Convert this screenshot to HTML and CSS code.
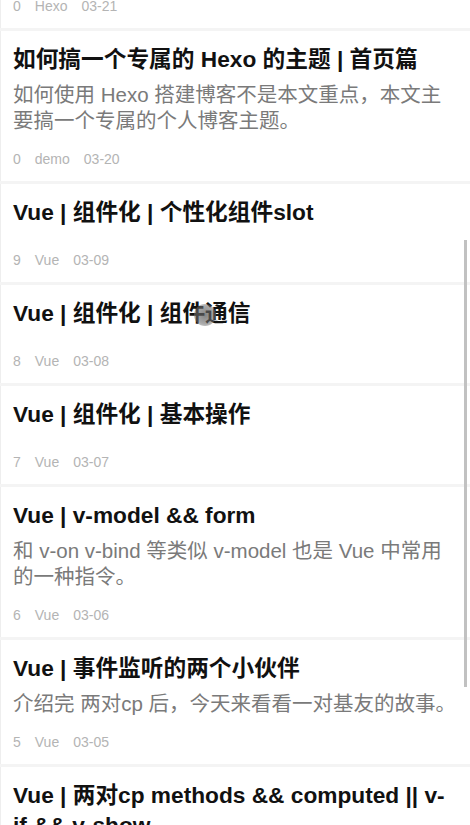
FILE: index.html
```html
<!DOCTYPE html>
<html lang="zh-CN">
<head>
<meta charset="utf-8">
<title>文章列表</title>
<link rel="stylesheet" href="styles.css">
</head>
<body>
<main class="list">
  <article class="card card--clipped">
    <div class="meta"><span>0</span><span>Hexo</span><span>03-21</span></div>
  </article>
  <article class="card">
    <h2 class="title">如何搞一个专属的 Hexo 的主题 | 首页篇</h2>
    <p class="desc">如何使用 Hexo 搭建博客不是本文重点，本文主要搞一个专属的个人博客主题。</p>
    <div class="meta"><span>0</span><span>demo</span><span>03-20</span></div>
  </article>
  <article class="card">
    <h2 class="title">Vue | 组件化 | 个性化组件slot</h2>
    <div class="meta"><span>9</span><span>Vue</span><span>03-09</span></div>
  </article>
  <article class="card">
    <h2 class="title">Vue | 组件化 | 组件通信</h2>
    <div class="meta"><span>8</span><span>Vue</span><span>03-08</span></div>
  </article>
  <article class="card">
    <h2 class="title">Vue | 组件化 | 基本操作</h2>
    <div class="meta"><span>7</span><span>Vue</span><span>03-07</span></div>
  </article>
  <article class="card">
    <h2 class="title">Vue | v-model &amp;&amp; form</h2>
    <p class="desc">和 v-on v-bind 等类似 v-model 也是 Vue 中常用的一种指令。</p>
    <div class="meta"><span>6</span><span>Vue</span><span>03-06</span></div>
  </article>
  <article class="card">
    <h2 class="title">Vue | 事件监听的两个小伙伴</h2>
    <p class="desc">介绍完 两对cp 后，今天来看看一对基友的故事。</p>
    <div class="meta"><span>5</span><span>Vue</span><span>03-05</span></div>
  </article>
  <article class="card">
    <h2 class="title">Vue | 两对cp methods &amp;&amp; computed || v-if &amp;&amp; v-show</h2>
    <div class="meta"><span>4</span><span>Vue</span><span>03-04</span></div>
  </article>
</main>
<div class="scrollbar"></div>
<div class="touch"></div>
</body>
</html>
```
FILE: styles.css
```css
html, body {
  margin: 0;
  padding: 0;
  height: 100%;
  overflow: hidden;
  background: #f4f4f4;
}
body {
  font-family: "Liberation Sans", Arial, "Noto Sans CJK SC", sans-serif;
  position: relative;
}
.list {
  display: flex;
  flex-direction: column;
  gap: 3px;
  background: #f4f4f4;
}
.card {
  background: #fff;
  border-left: 1px solid #eeeeee;
  padding: 13px 12px 12px 12px;
}
.card--clipped {
  padding-top: 0;
  padding-bottom: 16px;
}
.card--clipped .meta {
  line-height: 12px;
  margin-top: 0;
  overflow: hidden;
}
.title {
  margin: 0 3px 0 0;
  font-size: 22.7px;
  line-height: 30px;
  font-weight: bold;
  color: #111;
}
.desc {
  margin: 8px 0 0;
  font-size: 20.5px;
  line-height: 26px;
  color: #7a7a7a;
}
.meta {
  margin-top: 23px;
  font-size: 14px;
  line-height: 20px;
  color: #b4b4b4;
  display: flex;
  gap: 14px;
}
.desc + .meta {
  margin-top: 15px;
}
.scrollbar {
  position: absolute;
  left: 464px;
  top: 240px;
  width: 3px;
  height: 447px;
  background: #c1c1c1;
}
.touch {
  position: absolute;
  left: 194px;
  top: 304px;
  width: 22px;
  height: 22px;
  border-radius: 50%;
  background: radial-gradient(circle, rgba(90,90,90,0.75) 0%, rgba(110,110,110,0.6) 55%, rgba(150,150,150,0.25) 100%);
}
```
